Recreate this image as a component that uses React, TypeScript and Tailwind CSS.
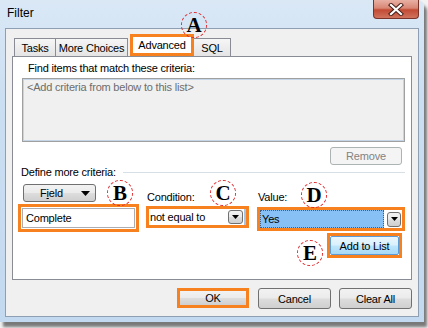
import React from "react";

const btnGray =
  "bg-[linear-gradient(180deg,#f2f2f2_0%,#ebebeb_48%,#dddddd_52%,#cfcfcf_100%)] border border-[#707070] rounded-[3px]";

function Tri({ w = 7, h = 4 }: { w?: number; h?: number }) {
  return (
    <svg width={w} height={h} viewBox={`0 0 ${w} ${h}`}>
      <polygon points={`0,0 ${w},0 ${w / 2},${h}`} fill="#000" />
    </svg>
  );
}

function Circle({ letter, pos }: { letter: string; pos: string }) {
  return (
    <div
      className={`absolute ${pos} w-[26px] h-[26px] rounded-full border border-dashed border-[#e0262a] flex items-center justify-center font-['Liberation_Serif',serif] font-bold text-[21px] leading-none text-black`}
    >
      <span className="mt-[1px]">{letter}</span>
    </div>
  );
}

export default function App() {
  return (
    <div className="relative w-[428px] h-[328px] overflow-hidden bg-[#f2f2f2] font-['Liberation_Sans',Arial,sans-serif] text-[11px] text-black tracking-[-0.2px]">
      <div className="w-[424px] h-[322px] flex flex-col bg-[linear-gradient(180deg,#dae8f6_0%,#cbdff2_30%,#c3d9ef_100%)] shadow-[3px_5px_3px_rgba(0,0,0,0.5)] rounded-tr-[6px]">
        {/* Title bar */}
        <div className="h-[28px] shrink-0 flex items-start">
          <span className="mt-[6px] ml-[7px] text-[12px] leading-[14px] tracking-normal">Filter</span>
          <div className="ml-auto mr-[5px] w-[46px] h-[19px] rounded-b-[4px] border border-t-0 border-[#7a3328] bg-[linear-gradient(180deg,#e8b0a4_0%,#d88674_45%,#c24a33_55%,#d0735d_100%)] flex items-center justify-center">
            <svg width="16" height="13" viewBox="0 0 16 13">
              <path d="M3 2 L13 11 M13 2 L3 11" stroke="#4a2019" strokeWidth="4.2" strokeLinecap="square" />
              <path d="M3 2 L13 11 M13 2 L3 11" stroke="#ffffff" strokeWidth="2.2" strokeLinecap="square" />
            </svg>
          </div>
        </div>

        {/* Body */}
        <div className="flex-1 flex px-[5px] pb-[5px]">
          <div className="flex-1 flex flex-col bg-[#f0f0f0] border border-[#8e9fb3]">
            {/* Tabs */}
            <div className="mt-[5px] h-[22px] flex items-end">
              <div className="ml-[8px] w-[42px] h-[18px] border border-b-0 border-[#898c95] bg-[linear-gradient(180deg,#f6f6f6,#e4e4e4)] flex items-center justify-center leading-[14px]">
                Tasks
              </div>
              <div className="ml-[-1px] w-[73px] h-[18px] border border-b-0 border-[#898c95] bg-[linear-gradient(180deg,#f6f6f6,#e4e4e4)] flex items-center justify-center leading-[14px]">
                More Choices
              </div>
              <div className="ml-[2px] w-[64px] h-[22px] border-[3px] border-[#f7801f] bg-white flex items-center justify-center leading-[14px]">
                Advanced
              </div>
              <div className="w-[37px] h-[18px] border border-b-0 border-l-0 border-[#898c95] bg-[linear-gradient(180deg,#f6f6f6,#e4e4e4)] flex items-center justify-center leading-[14px]">
                SQL
              </div>
            </div>

            {/* Panel */}
            <div className="ml-[6px] w-[400px] h-[224px] bg-white border border-[#898c95] flex flex-col">
              <div className="ml-[15px] mt-[4px] leading-[14px]">Find items that match these criteria:</div>
              <div className="ml-[9px] mt-[3px] w-[383px] h-[64px] border border-[#a0a0a0] bg-[#f0f0f0]">
                <div className="h-full border border-[#c5d5e8] pl-[3px] leading-[14px] text-[#6d6d6d]">
                  &lt;Add criteria from below to this list&gt;
                </div>
              </div>
              <div className="self-end mr-[9px] mt-[5px] w-[72px] h-[18px] border border-[#adb2b5] rounded-[3px] bg-[#f4f4f4] flex items-center justify-center text-[#838383] leading-[14px]">
                Remove
              </div>
              <div className="flex items-center ml-[8px] mr-[6px] h-[14px]">
                <span className="leading-[14px]">Define more criteria:</span>
                <div className="flex-1 ml-[7px] h-px bg-[#d5dfe5]" />
              </div>

              {/* Controls */}
              <div className="flex items-start">
                {/* col 1 */}
                <div className="ml-[5px] w-[121px] flex flex-col">
                  <div className={`ml-[5px] mt-[5px] w-[73px] h-[18px] ${btnGray} flex items-center`}>
                    <span className="ml-[16px] leading-[14px]">
                      F<span className="underline">i</span>eld
                    </span>
                    <span className="ml-auto mr-[5px] flex">
                      <Tri w={9} h={5} />
                    </span>
                  </div>
                  <div className="mt-[2px] h-[28px] border-[3px] border-[#f7801f] p-[1px]">
                    <div className="h-full border border-[#abadb3] bg-white flex items-center pl-[3px] leading-[14px]">
                      Complete
                    </div>
                  </div>
                </div>

                {/* col 2 */}
                <div className="ml-[7px] w-[103px] flex flex-col">
                  <div className="mt-[11px] pl-[1px] leading-[14px]">Condition:</div>
                  <div className="mt-[2px] h-[22px] border-[3px] border-[#f7801f] bg-white flex items-center">
                    <span className="flex-1 pl-[1px] leading-[14px]">not equal to</span>
                    <div className={`w-[15px] h-[14px] ${btnGray} flex items-center justify-center`}>
                      <Tri />
                    </div>
                    <div className="ml-[1px] w-[2px] h-full bg-[#a9c5e4]" />
                  </div>
                </div>

                {/* col 3 */}
                <div className="ml-[8px] w-[148px] flex flex-col">
                  <div className="mt-[11px] pl-[1px] leading-[14px]">Value:</div>
                  <div className="mt-[3px] h-[24px] border-[3px] border-[#f7801f] bg-white flex items-center">
                    <div className="w-[124px] h-[18px] bg-[#86c0f5] border border-dotted border-[#3a5f8a] flex items-center pl-[1px] leading-[14px]">
                      Yes
                    </div>
                    <div className={`ml-auto mr-[1px] w-[14px] h-[15px] ${btnGray} flex items-center justify-center`}>
                      <Tri />
                    </div>
                  </div>
                  <div className="ml-[70px] mt-[2px] w-[75px] h-[25px] border-[3px] border-[#f7801f]">
                    <div className="h-full border border-[#5a9bd8] rounded-[2px] bg-[linear-gradient(180deg,#eaf6fd_0%,#d9f0fc_48%,#bee6fd_52%,#a7d9f5_100%)] flex items-center justify-center leading-[14px]">
                      Add to List
                    </div>
                  </div>
                </div>
              </div>
            </div>

            {/* Bottom buttons */}
            <div className="mt-[8px] flex items-start justify-end pr-[6px]">
              <div className="mr-[9px] w-[72px] h-[20px] border-[3px] border-[#f7801f]">
                <div className="h-full bg-[linear-gradient(180deg,#f2f2f2_0%,#ebebeb_48%,#dddddd_52%,#cfcfcf_100%)] flex items-center justify-center leading-[14px]">
                  OK
                </div>
              </div>
              <div className={`w-[73px] h-[21px] ${btnGray} flex items-center justify-center leading-[14px]`}>
                Cancel
              </div>
              <div className={`ml-[8px] w-[73px] h-[21px] ${btnGray} flex items-center justify-center leading-[14px]`}>
                Clear All
              </div>
            </div>
          </div>
        </div>
      </div>

      <Circle letter="A" pos="left-[181px] top-[12px]" />
      <Circle letter="B" pos="left-[107px] top-[180px]" />
      <Circle letter="C" pos="left-[210px] top-[180px]" />
      <Circle letter="D" pos="left-[301px] top-[182px]" />
      <Circle letter="E" pos="left-[297px] top-[240px]" />
    </div>
  );
}
